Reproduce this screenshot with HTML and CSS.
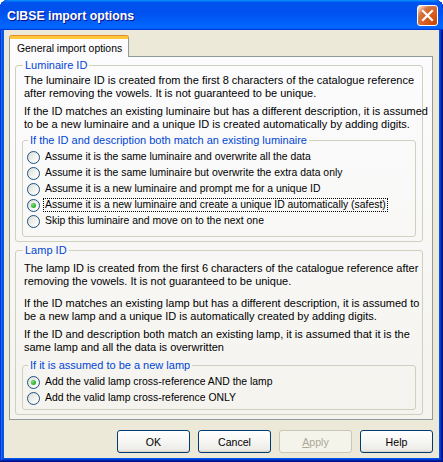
FILE: index.html
```html
<!DOCTYPE html>
<html lang="en">
<head>
<meta charset="utf-8">
<title>CIBSE import options</title>
<link rel="stylesheet" href="styles.css">
</head>
<body>
<div class="window">
  <div class="titlebar">
    <span class="title">CIBSE import options</span>
    <button class="close" type="button" aria-label="Close">
      <svg width="13" height="13" viewBox="0 0 13 13"><path d="M2 2 L11 11 M11 2 L2 11" stroke="#fff" stroke-width="2.2" stroke-linecap="square"/></svg>
    </button>
  </div>
  <div class="client">
    <div class="tabs">
      <div class="tab active">General import options</div>
    </div>
    <div class="page">
      <fieldset class="group outer lum">
        <legend>Luminaire ID</legend>
        <p class="p-lum1">The luminaire ID is created from the first 8 characters of the catalogue reference<br>after removing the vowels. It is not guaranteed to be unique.</p>
        <p class="p-lum2">If the ID matches an existing luminaire but has a different description, it is assumed<br>to be a new luminaire and a unique ID is created automatically by adding digits.</p>
        <fieldset class="group inner inner-lum">
          <legend>If the ID and description both match an existing luminaire</legend>
          <label class="radio"><span class="rb"></span><span class="txt">Assume it is the same luminaire and overwrite all the data</span></label>
          <label class="radio"><span class="rb"></span><span class="txt">Assume it is the same luminaire but overwrite the extra data only</span></label>
          <label class="radio"><span class="rb"></span><span class="txt">Assume it is a new luminaire and prompt me for a unique ID</span></label>
          <label class="radio"><span class="rb on"></span><span class="txt focus">Assume it is a new luminaire and create a unique ID automatically (safest)</span></label>
          <label class="radio"><span class="rb"></span><span class="txt">Skip this luminaire and move on to the next one</span></label>
        </fieldset>
      </fieldset>
      <fieldset class="group outer lamp">
        <legend>Lamp ID</legend>
        <p class="p-lamp1">The lamp ID is created from the first 6 characters of the catalogue reference after<br>removing the vowels. It is not guaranteed to be unique.</p>
        <p class="p-lamp2">If the ID matches an existing lamp but has a different description, it is assumed to<br>be a new lamp and a unique ID is automatically created by adding digits.</p>
        <p class="p-lamp3">If the ID and description both match an existing lamp, it is assumed that it is the<br>same lamp and all the data is overwritten</p>
        <fieldset class="group inner inner-lamp">
          <legend>If it is assumed to be a new lamp</legend>
          <label class="radio"><span class="rb on"></span><span class="txt">Add the valid lamp cross-reference AND the lamp</span></label>
          <label class="radio"><span class="rb"></span><span class="txt">Add the valid lamp cross-reference ONLY</span></label>
        </fieldset>
      </fieldset>
    </div>
    <div class="buttons">
      <button class="btn" type="button">OK</button>
      <button class="btn" type="button">Cancel</button>
      <button class="btn disabled" type="button" disabled><u>A</u>pply</button>
      <button class="btn" type="button">Help</button>
    </div>
  </div>
</div>
</body>
</html>
```
FILE: styles.css
```css
html, body {
  margin: 0;
  padding: 0;
  background: #fff;
}

body {
  font-family: "Liberation Sans", Arial, sans-serif;
  font-size: 11px;
  line-height: 13px;
  color: #000;
}

/* ---- window frame ---- */
.window {
  width: 443px;
  height: 462px;
  box-sizing: border-box;
  display: flex;
  flex-direction: column;
  background: #0831d9;
  border-radius: 8px 8px 0 0;
  overflow: hidden;
  box-shadow:
    inset -1px -1px #00138c,
    inset 1px 1px #0831d9,
    inset -2px -2px #001ea0,
    inset 2px 2px #166aee,
    inset -3px -3px #003bda,
    inset 3px 3px #0855dd,
    inset -4px -4px #0055e5,
    inset 4px 4px #0058ee;
}

.titlebar {
  height: 30px;
  flex: none;
  display: flex;
  align-items: center;
  justify-content: space-between;
  padding: 0 5px 0 7px;
  background: linear-gradient(180deg, #0997ff, #0053ee 8%, #0050ee 40%, #06f 88%, #06f 93%, #005bff 95%, #003dd7 96%, #003dd7);
  border-radius: 8px 8px 0 0;
}

.title {
  font-family: "Liberation Sans", Arial, sans-serif;
  font-weight: bold;
  font-size: 12.3px;
  color: #fff;
  text-shadow: 1px 1px #0f1089;
  margin-top: 2px;
}

.close {
  width: 21px;
  height: 21px;
  padding: 0;
  margin-top: 1px;
  box-sizing: border-box;
  border: 1px solid #fff;
  border-radius: 3px;
  display: flex;
  align-items: center;
  justify-content: center;
  background: radial-gradient(circle at 90% 90%, #cc4600 0%, #dc6527 55%, #cd7546 70%, #ffccb2 90%, #fff 100%);
}

.close svg {
  display: block;
}

/* ---- client area ---- */
.client {
  flex: 1;
  margin: 0 4px 4px;
  background: #ece9d8;
  padding: 6px 0 0 5px;
  display: flex;
  flex-direction: column;
}

.tabs {
  display: flex;
  height: 21px;
  position: relative;
  z-index: 1;
  margin-bottom: -1px;
}

.tab {
  box-sizing: border-box;
  height: 21px;
  padding: 3px 0 0 7px;
  border: 1px solid #919b9c;
  border-bottom: none;
  border-top: 3px solid #ffc73c;
  border-radius: 3px 3px 0 0;
  background: #fcfcfe;
  box-shadow: 0 -1px 0 #e68b2c;
  font-size: 10.4px;
  line-height: 13px;
  white-space: nowrap;
  width: 120px;
}

.page {
  width: 424px;
  height: 364px;
  box-sizing: border-box;
  border: 1px solid #919b9c;
  background: linear-gradient(180deg, #fcfcfe, #f4f3ee);
  padding: 2px 9px 0 5px;
}

/* ---- group boxes ---- */
.group {
  margin: 0;
  border: 1px solid #d0d0bf;
  border-radius: 3px;
  min-width: 0;
}

.group legend {
  color: #0046d5;
  padding: 0 2px;
  line-height: 13px;
  white-space: nowrap;
}

.outer {
  padding: 0 6px 4px 8px;
}

.outer > legend {
  margin-left: -1px;
}

.lamp {
  margin-top: 2px;
}

p {
  margin: 0;
  white-space: nowrap;
}

.p-lum1 { margin-top: 2px; }
.p-lum2 { margin-top: 5px; }
.p-lamp1 { margin-top: 5px; }
.p-lamp2 { margin-top: 9px; }
.p-lamp3 { margin-top: 5px; }

.inner {
  margin-left: -2px;
  padding: 2px 4px 7px 4px;
}

.inner > legend {
  margin-left: 1px;
}

.inner-lum { margin-top: 3px; }
.inner-lamp { margin-top: 5px; padding-bottom: 3px; }

/* ---- radio buttons ---- */
.radio {
  display: flex;
  align-items: center;
  height: 16px;
  white-space: nowrap;
  font-size: 10.4px;
}

.rb {
  flex: none;
  width: 13px;
  height: 13px;
  box-sizing: border-box;
  border: 1px solid #1c5180;
  border-radius: 50%;
  background: linear-gradient(135deg, #dcdcd7 0%, #f2f2ee 55%, #fff 100%);
  display: flex;
  align-items: center;
  justify-content: center;
}

.rb.on::after {
  content: "";
  width: 5px;
  height: 5px;
  border-radius: 50%;
  background: radial-gradient(circle at 35% 35%, #7be07b 0%, #3cb83c 50%, #21a121 100%);
}

.txt {
  margin-left: 3px;
  padding: 0 1px;
  line-height: 12px;
  border: 1px dotted transparent;
}

.txt.focus {
  border-color: #000;
}

/* ---- command buttons ---- */
.buttons {
  display: flex;
  justify-content: flex-end;
  gap: 8px;
  padding-right: 6px;
  margin-top: 10px;
}

.btn {
  width: 73px;
  height: 23px;
  box-sizing: border-box;
  padding: 0;
  font-family: "Liberation Sans", Arial, sans-serif;
  font-size: 10.6px;
  color: #000;
  border: 1px solid #003c74;
  border-radius: 3px;
  background: linear-gradient(180deg, #fff 0%, #f8f8f6 40%, #ecebe6 90%, #d6d0c5 100%);
}

.btn.disabled {
  color: #aca899;
  border-color: #c9c7ba;
  background: #f5f4ea;
}

.btn u {
  text-decoration: underline;
}
```
